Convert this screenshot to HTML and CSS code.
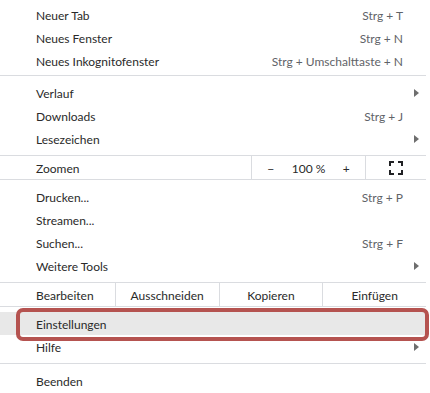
FILE: index.html
```html
<!DOCTYPE html>
<html lang="de">
<head>
  <meta charset="UTF-8">
  <meta name="viewport" content="width=device-width, initial-scale=1.0">
  <title>Menü</title>

  <link rel="stylesheet" href="styles.css">
</head>

<body>

  <div class="menu">
    <!-- Tabs und Fenster -->
    <div class="group first">
      <div class="item"><span class="label">Neuer Tab</span><span class="key">Strg + T</span><span class="slot"></span></div>
      <div class="item"><span class="label">Neues Fenster</span><span class="key">Strg + N</span><span class="slot"></span></div>
      <div class="item"><span class="label">Neues Inkognitofenster</span><span class="key">Strg + Umschalttaste + N</span><span class="slot"></span></div>
    </div>

    <div class="group">
      <div class="item"><span class="label">Verlauf</span><span class="slot"><span class="arrow"></span></span></div>
      <div class="item"><span class="label">Downloads</span><span class="key">Strg + J</span><span class="slot"></span></div>
      <div class="item"><span class="label">Lesezeichen</span><span class="slot"><span class="arrow"></span></span></div>
    </div>

    <!-- Zoom -->
    <div class="zoom-row">
      <span class="row-label">Zoomen</span>
      <div class="zoom-controls">
        <span class="zoom-btn">−</span>
        <span class="zoom-btn">100 %</span>
        <span class="zoom-btn">+</span>
      </div>
      <div class="zoom-full">
        <svg width="14" height="14" viewBox="0 0 14 14">
          <path d="M1 5V1H5M9 1H13V5M13 9V13H9M5 13H1V9" fill="none" stroke="#202124" stroke-width="2"/>
        </svg>
      </div>
    </div>

    <div class="group">
      <div class="item"><span class="label">Drucken...</span><span class="key">Strg + P</span><span class="slot"></span></div>
      <div class="item"><span class="label">Streamen...</span><span class="slot"></span></div>
      <div class="item"><span class="label">Suchen...</span><span class="key">Strg + F</span><span class="slot"></span></div>
      <div class="item"><span class="label">Weitere Tools</span><span class="slot"><span class="arrow"></span></span></div>
    </div>

    <!-- Bearbeiten -->
    <div class="edit-row">
      <span class="row-label">Bearbeiten</span>
      <span class="edit-btn">Ausschneiden</span>
      <span class="edit-btn">Kopieren</span>
      <span class="edit-btn">Einfügen</span>
    </div>

    <div class="group">
      <div class="item active">
        <span class="label">Einstellungen</span><span class="slot"></span>
        <div class="mark"></div>
      </div>
      <div class="item"><span class="label">Hilfe</span><span class="slot"><span class="arrow"></span></span></div>
    </div>

    <div class="group">
      <div class="item"><span class="label">Beenden</span><span class="slot"></span></div>
    </div>
  </div>

</body>
</html>
```

FILE: styles.css
```css
body {
  margin: 0;
  background: #fff;
  font-family: 'Lato', 'Segoe UI', sans-serif;
  font-size: 12px;
  color: #2a2a2a;
}

.menu {
  width: 426px;
  background-color: #fff;
}

.group {
  padding: 5px 0;
  border-top: 1px solid #dadce0;
}

.group.first {
  padding: 3px 0;
  border-top: none;
}

.item {
  position: relative;
  display: flex;
  align-items: center;
  box-sizing: border-box;
  height: 23px;
  padding: 1px 7px 0 36px;
}

.item.active {
  background-color: #e8e8e8;
}

.label {
  flex: 1;
}

.key {
  color: #5f6368;
}

.slot {
  width: 16px;
  display: flex;
  justify-content: flex-end;
}

.arrow {
  width: 0;
  height: 0;
  border-top: 4px solid transparent;
  border-bottom: 4px solid transparent;
  border-left: 5px solid #6e6e6e;
}

/* Zoomzeile */
.zoom-row, .edit-row {
  display: flex;
  height: 23px;
  border-top: 1px solid #dadce0;
}

.row-label {
  display: flex;
  align-items: center;
  padding: 1px 0 0 36px;
}

.zoom-row .row-label {
  width: 215px;
}

.zoom-controls {
  display: flex;
  width: 113px;
  border-left: 1px solid #dadce0;
}

.zoom-btn {
  flex: 1;
  display: flex;
  align-items: center;
  justify-content: center;
  padding-top: 1px;
}

.zoom-full {
  flex: 1;
  display: flex;
  align-items: center;
  justify-content: center;
  border-left: 1px solid #dadce0;
}

/* Bearbeitenzeile */
.edit-row .row-label {
  width: 79px;
}

.edit-btn {
  width: 103px;
  display: flex;
  align-items: center;
  justify-content: center;
  padding-top: 1px;
  border-left: 1px solid #dadce0;
}

/* Markierung um Einstellungen */
.mark {
  position: absolute;
  left: 16px;
  right: -3px;
  top: -4px;
  bottom: -6px;
  border: 4px solid #b55350;
  border-radius: 7px;
  box-sizing: border-box;
}
```
